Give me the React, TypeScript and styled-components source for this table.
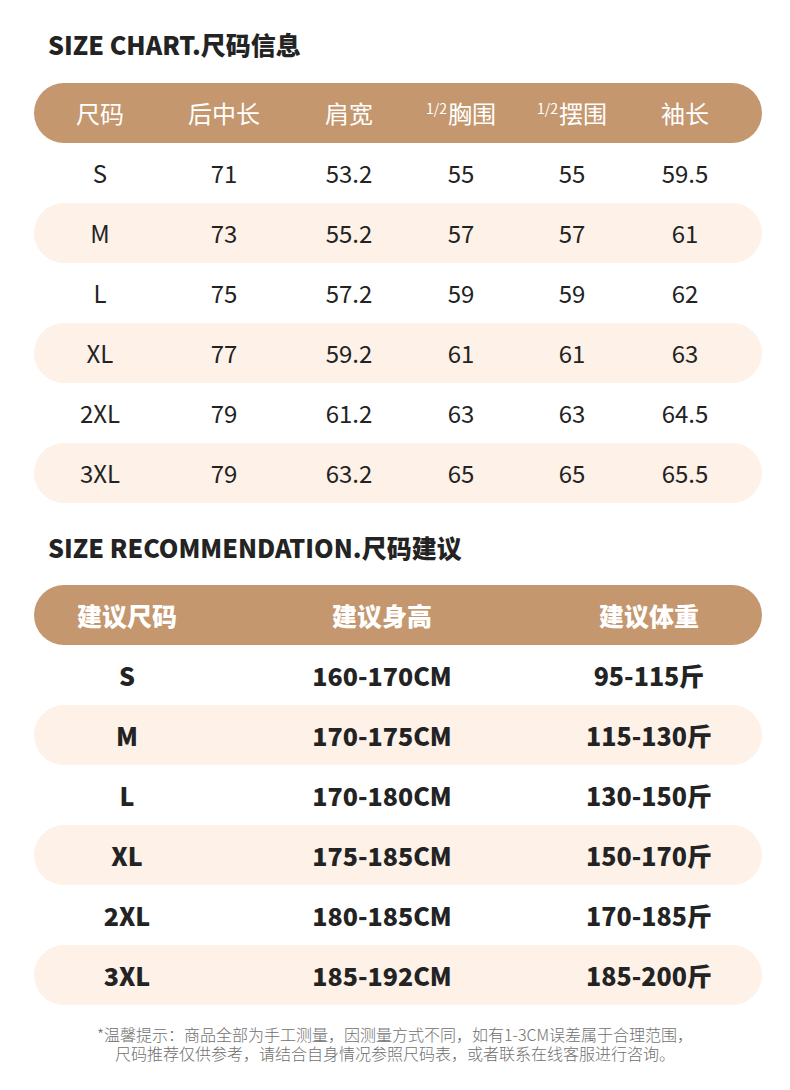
import React from "react";
import styled, { createGlobalStyle } from "styled-components";

const Global = createGlobalStyle`
  html, body { margin: 0; padding: 0; background: #ffffff; }
  body { font-family: "Noto Sans CJK SC", "Noto Sans", sans-serif; color: #222222; }
`;

const Page = styled.div`
  width: 790px;
  padding-top: 29px;
  box-sizing: border-box;
`;

const Title = styled.h2<{ $top?: number }>`
  margin: ${(p) => p.$top ?? 0}px 0 0 48px;
  font-size: 25px;
  line-height: 30px;
  font-weight: 900;
  color: #232323;
`;

const Table = styled.div<{ $top: number }>`
  margin: ${(p) => p.$top}px 28px 0 34px;
  display: flex;
  flex-direction: column;
`;

const Row = styled.div<{ $cols: string; $kind: "head" | "stripe" | "plain" }>`
  display: grid;
  grid-template-columns: ${(p) => p.$cols};
  height: 60px;
  align-items: center;
  border-radius: 30px;
  background: ${(p) =>
    p.$kind === "head" ? "#c4976f" : p.$kind === "stripe" ? "#fdf1e8" : "transparent"};
  color: ${(p) => (p.$kind === "head" ? "#ffffff" : "#232323")};
`;

const Cell = styled.div<{ $bold?: boolean }>`
  text-align: center;
  font-size: ${(p) => (p.$bold ? 25 : 24)}px;
  line-height: 30px;
  font-weight: ${(p) => (p.$bold ? 900 : 400)};
  white-space: nowrap;
`;

const Sup = styled.sup`
  font-size: 14px;
  vertical-align: 9px;
  line-height: 0;
  margin-right: 1px;
`;

const Footer = styled.div`
  margin-top: 20px;
  display: flex;
  flex-direction: column;
  align-items: center;
  font-size: 16px;
  font-weight: 300;
  color: #707070;
`;

const FootLine = styled.div`
  line-height: 19px;
  white-space: nowrap;
`;

const cols1 = "132px 116px 134px 90px 132px 94px";
const cols2 = "186px 324px 210px";

const sizeRows = [
  ["S", "71", "53.2", "55", "55", "59.5"],
  ["M", "73", "55.2", "57", "57", "61"],
  ["L", "75", "57.2", "59", "59", "62"],
  ["XL", "77", "59.2", "61", "61", "63"],
  ["2XL", "79", "61.2", "63", "63", "64.5"],
  ["3XL", "79", "63.2", "65", "65", "65.5"],
];

const recRows = [
  ["S", "160-170CM", "95-115斤"],
  ["M", "170-175CM", "115-130斤"],
  ["L", "170-180CM", "130-150斤"],
  ["XL", "175-185CM", "150-170斤"],
  ["2XL", "180-185CM", "170-185斤"],
  ["3XL", "185-192CM", "185-200斤"],
];

export default function App() {
  return (
    <Page>
      <Global />
      <Title>SIZE CHART.尺码信息</Title>
      <Table $top={24}>
        <Row $cols={cols1} $kind="head">
          <Cell>尺码</Cell>
          <Cell>后中长</Cell>
          <Cell>肩宽</Cell>
          <Cell>
            <Sup>1/2</Sup>胸围
          </Cell>
          <Cell>
            <Sup>1/2</Sup>摆围
          </Cell>
          <Cell>袖长</Cell>
        </Row>
        {sizeRows.map((r, i) => (
          <Row key={r[0]} $cols={cols1} $kind={i % 2 === 1 ? "stripe" : "plain"}>
            {r.map((v, j) => (
              <Cell key={j}>{v}</Cell>
            ))}
          </Row>
        ))}
      </Table>
      <Title $top={29}>SIZE RECOMMENDATION.尺码建议</Title>
      <Table $top={23}>
        <Row $cols={cols2} $kind="head">
          <Cell $bold>建议尺码</Cell>
          <Cell $bold>建议身高</Cell>
          <Cell $bold>建议体重</Cell>
        </Row>
        {recRows.map((r, i) => (
          <Row key={r[0]} $cols={cols2} $kind={i % 2 === 1 ? "stripe" : "plain"}>
            {r.map((v, j) => (
              <Cell key={j} $bold>
                {v}
              </Cell>
            ))}
          </Row>
        ))}
      </Table>
      <Footer>
        <FootLine>*温馨提示：商品全部为手工测量，因测量方式不同，如有1-3CM误差属于合理范围，</FootLine>
        <FootLine>尺码推荐仅供参考，请结合自身情况参照尺码表，或者联系在线客服进行咨询。</FootLine>
      </Footer>
    </Page>
  );
}
